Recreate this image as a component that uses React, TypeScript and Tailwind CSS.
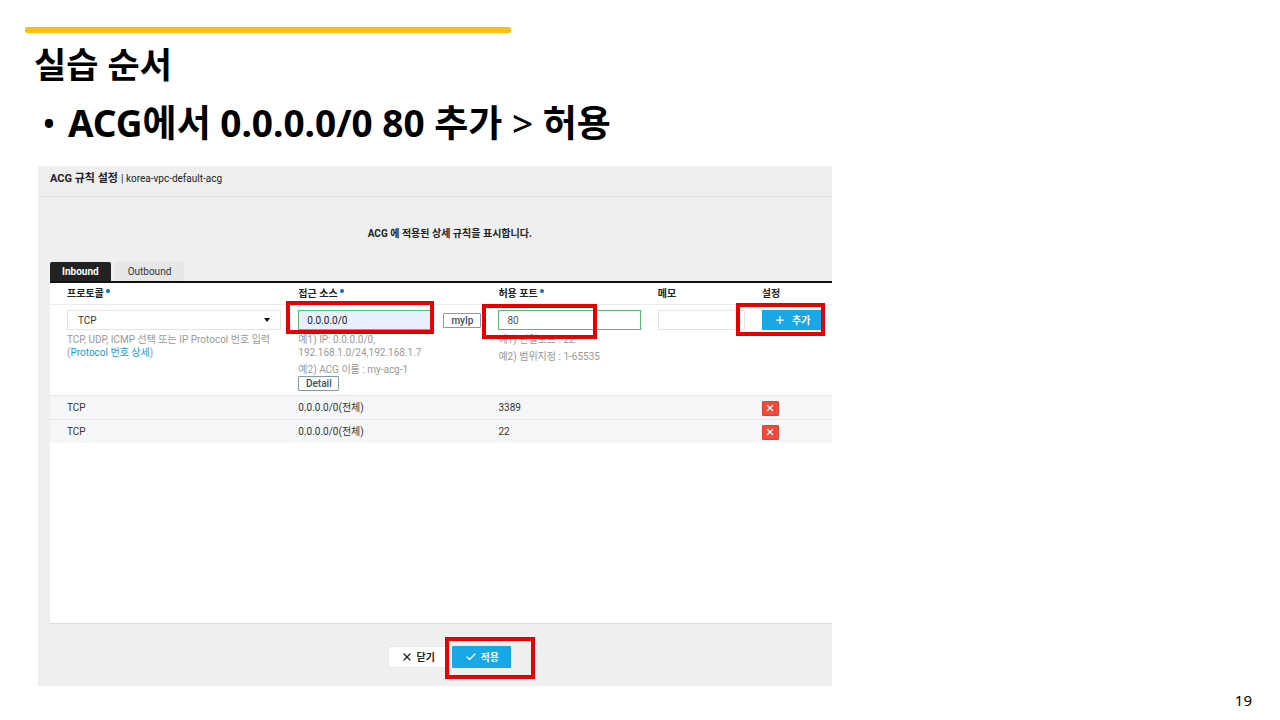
import { useState, type ReactNode } from "react"
import { Check, Plus, X } from "lucide-react"

type Rule = {
    id: number
    protocol: string
    source: string
    port: string
}

const initialRules: Rule[] = [
    { id: 1, protocol: "TCP", source: "0.0.0.0/0(전체)", port: "3389" },
    { id: 2, protocol: "TCP", source: "0.0.0.0/0(전체)", port: "22" },
]

// Red frame drawn over the control it points at
function Highlight({ className }: { className: string }) {
    return <span aria-hidden="true" className={`pointer-events-none absolute z-10 border-4 border-[#e60000] ${className}`} />
}

function HeadCell({ children, required }: { children: ReactNode; required?: boolean }) {
    return (
        <th scope="col" className="h-[22px] border-b border-[#ececec] pl-[17px] text-left font-bold text-[#222]">
            <span className="flex items-center gap-[2px]">
                {children}
                {required && <span className="mb-[6px] size-1 rounded-full bg-[#0b72c4]" />}
            </span>
        </th>
    )
}

function RuleForm() {
    const [protocol, setProtocol] = useState("TCP")
    const [source, setSource] = useState("0.0.0.0/0")
    const [port, setPort] = useState("80")
    const [memo, setMemo] = useState("")

    return (
        <tr className="h-[90px] align-top text-[#999]">
            <td className="pt-[5px] pl-[17px]">
                <div className="relative">
                    <select
                        aria-label="프로토콜"
                        value={protocol}
                        onChange={(e) => setProtocol(e.target.value)}
                        className="block h-5 w-full appearance-none border border-[#e4e4e4] bg-white px-[10px] text-[#333]"
                    >
                        <option>TCP</option>
                        <option>UDP</option>
                        <option>ICMP</option>
                    </select>
                    <svg viewBox="0 0 6 4" className="pointer-events-none absolute top-2 right-[11px] h-1 w-[6px]">
                        <path d="M0 0h6L3 4z" fill="#111" />
                    </svg>
                </div>
                <p className="mt-[3px]">TCP, UDP, ICMP 선택 또는 IP Protocol 번호 입력</p>
                <p>
                    (<a href="#protocol" className="text-[#1a9bd7]">Protocol 번호 상세</a>)
                </p>
            </td>
            <td className="pt-[5px] pl-[17px]">
                <div className="flex items-center gap-[9px]">
                    <div className="relative min-w-0 flex-1">
                        <input
                            aria-label="접근 소스"
                            value={source}
                            onChange={(e) => setSource(e.target.value)}
                            className="block h-5 w-full border border-[#5cb877] bg-[#e8f0fe] px-2 text-[#222]"
                        />
                        <Highlight className="-top-[9px] right-0 -bottom-1 -left-3" />
                    </div>
                    <button type="button" className="h-[15px] w-[38px] rounded-[1px] border border-[#8a99a8] bg-white font-medium text-[#3d4f63]">
                        myIp
                    </button>
                </div>
                <p className="mt-[3px]">예1) IP: 0.0.0.0/0,</p>
                <p>192.168.1.0/24,192.168.1.7</p>
                <p className="mt-1">예2) ACG 이름 : my-acg-1</p>
                <button type="button" className="flex h-[15px] w-[41px] items-center justify-center rounded-[1px] border border-[#8a99a8] bg-white font-medium text-[#3d4f63]">
                    Detail
                </button>
            </td>
            <td className="pt-[5px] pl-[17px]">
                <div className="relative">
                    <input
                        aria-label="허용 포트"
                        value={port}
                        onChange={(e) => setPort(e.target.value)}
                        className="block h-5 w-full border border-[#5cb877] bg-white px-2 text-[#555]"
                    />
                    <Highlight className="-top-[6px] -bottom-[9px] -left-4 w-[115px]" />
                </div>
                <p className="mt-[3px]">예1) 단일포트 : 22</p>
                <p className="mt-1">예2) 범위지정 : 1-65535</p>
            </td>
            <td className="pt-[5px] pl-[17px]">
                <input
                    aria-label="메모"
                    value={memo}
                    onChange={(e) => setMemo(e.target.value)}
                    className="block h-5 w-full border border-[#e4e4e4] bg-white px-2 text-[#555]"
                />
            </td>
            <td className="pt-[5px] pl-[17px]">
                <div className="relative w-[59px]">
                    <button type="button" className="flex h-5 w-full items-center justify-center gap-[6px] bg-[#18a8e8] pl-[2px] font-bold text-white">
                        <Plus size={12} strokeWidth={2.5} />
                        추가
                    </button>
                    <Highlight className="-top-[7px] -right-1 -bottom-[6px] -left-[26px]" />
                </div>
            </td>
        </tr>
    )
}

function RuleTable() {
    const [rules, setRules] = useState(initialRules)

    return (
        <div className="min-h-[343px] border-t-2 border-b border-t-[#111] border-b-[#dedede] bg-white">
            <table className="w-full table-fixed border-separate border-spacing-0">
                <colgroup>
                    <col className="w-[29.6%]" />
                    <col className="w-[25.6%]" />
                    <col className="w-[20.4%]" />
                    <col className="w-[13.3%]" />
                    <col className="w-[11.1%]" />
                </colgroup>
                <thead>
                    <tr>
                        <HeadCell required>프로토콜</HeadCell>
                        <HeadCell required>접근 소스</HeadCell>
                        <HeadCell required>허용 포트</HeadCell>
                        <HeadCell>메모</HeadCell>
                        <HeadCell>설정</HeadCell>
                    </tr>
                </thead>
                <tbody>
                    <RuleForm />
                    {rules.map((r) => (
                        <tr key={r.id} className="h-6 bg-[#f5f6f8] text-[#333] [&>td]:border-t [&>td]:border-[#e5e7e9] [&>td]:pl-[17px]">
                            <td>{r.protocol}</td>
                            <td>{r.source}</td>
                            <td>{r.port}</td>
                            <td></td>
                            <td>
                                <button
                                    type="button"
                                    aria-label="삭제"
                                    onClick={() => setRules(rules.filter((x) => x.id !== r.id))}
                                    className="mt-px flex h-[15px] w-[17px] items-center justify-center rounded-[1px] border border-[#dd4130] bg-[#f04b3a] text-white"
                                >
                                    <X size={10} strokeWidth={3} />
                                </button>
                            </td>
                        </tr>
                    ))}
                </tbody>
            </table>
        </div>
    )
}

function AcgPanel() {
    const [tab, setTab] = useState("Inbound")

    return (
        <section className="ml-[38px] w-[62%] bg-[#efefef] font-[Roboto,'Noto_Sans_CJK_KR',sans-serif] text-[10px] leading-[13px] text-[#222]">
            <header className="flex h-[31px] items-center gap-[3px] border-b border-[#e2e2e2] pb-[6px] pl-3">
                <h2 className="text-[11px] font-bold">ACG 규칙 설정</h2>
                <span>| korea-vpc-default-acg</span>
            </header>

            <p className="mt-[30px] pl-[30px] text-center font-bold">ACG 에 적용된 상세 규칙을 표시합니다.</p>

            <div className="mt-[22px] ml-3">
                <div role="tablist" className="flex gap-1">
                    {["Inbound", "Outbound"].map((name) => (
                        <button
                            key={name}
                            type="button"
                            role="tab"
                            aria-selected={tab === name}
                            onClick={() => setTab(name)}
                            className={
                                tab === name
                                    ? "h-[19px] rounded-t-[2px] bg-[#222] px-3 font-bold text-white"
                                    : "h-[19px] rounded-t-[2px] bg-[#e7e7e7] px-[13px] text-[#333]"
                            }
                        >
                            {name}
                        </button>
                    ))}
                </div>
                <RuleTable />
            </div>

            <div className="flex h-[62px] justify-center gap-[5px] pt-[22px] pl-[30px]">
                <button type="button" className="flex h-[22px] w-[59px] items-center justify-center gap-1 border border-[#e8e8e8] bg-white font-bold">
                    <X size={12} strokeWidth={2.5} />
                    닫기
                </button>
                <div className="relative h-[22px] w-[59px]">
                    <button type="button" className="flex size-full items-center justify-center gap-1 rounded-[1px] bg-[#18a8e8] font-bold text-white">
                        <Check size={12} strokeWidth={2.5} />
                        적용
                    </button>
                    <Highlight className="-top-[9px] -right-6 -bottom-[11px] -left-[7px]" />
                </div>
            </div>
        </section>
    )
}

export default function App() {
    return (
        <main className="min-h-screen bg-white pt-[27px] font-['Noto_Sans','Noto_Sans_CJK_KR',sans-serif] text-black">
            <div className="ml-[25px] h-[6px] w-[38%] rounded-[2px] bg-[#fcc00c]" />
            <h1 className="mt-3 ml-[34px] text-[35px] leading-10 font-bold">실습 순서</h1>
            <ul className="mt-[15px] mb-5 ml-[42px]">
                <li className="flex gap-3 text-[37px] leading-[46px] font-bold">
                    <span aria-hidden="true" className="font-normal">•</span>
                    <span>
                        ACG에서 0.0.0.0/0 80 추가 <span className="font-medium">&gt;</span> 허용
                    </span>
                </li>
            </ul>
            <AcgPanel />
            <footer className="pr-7 text-right text-[15px] leading-7">19</footer>
        </main>
    )
}
